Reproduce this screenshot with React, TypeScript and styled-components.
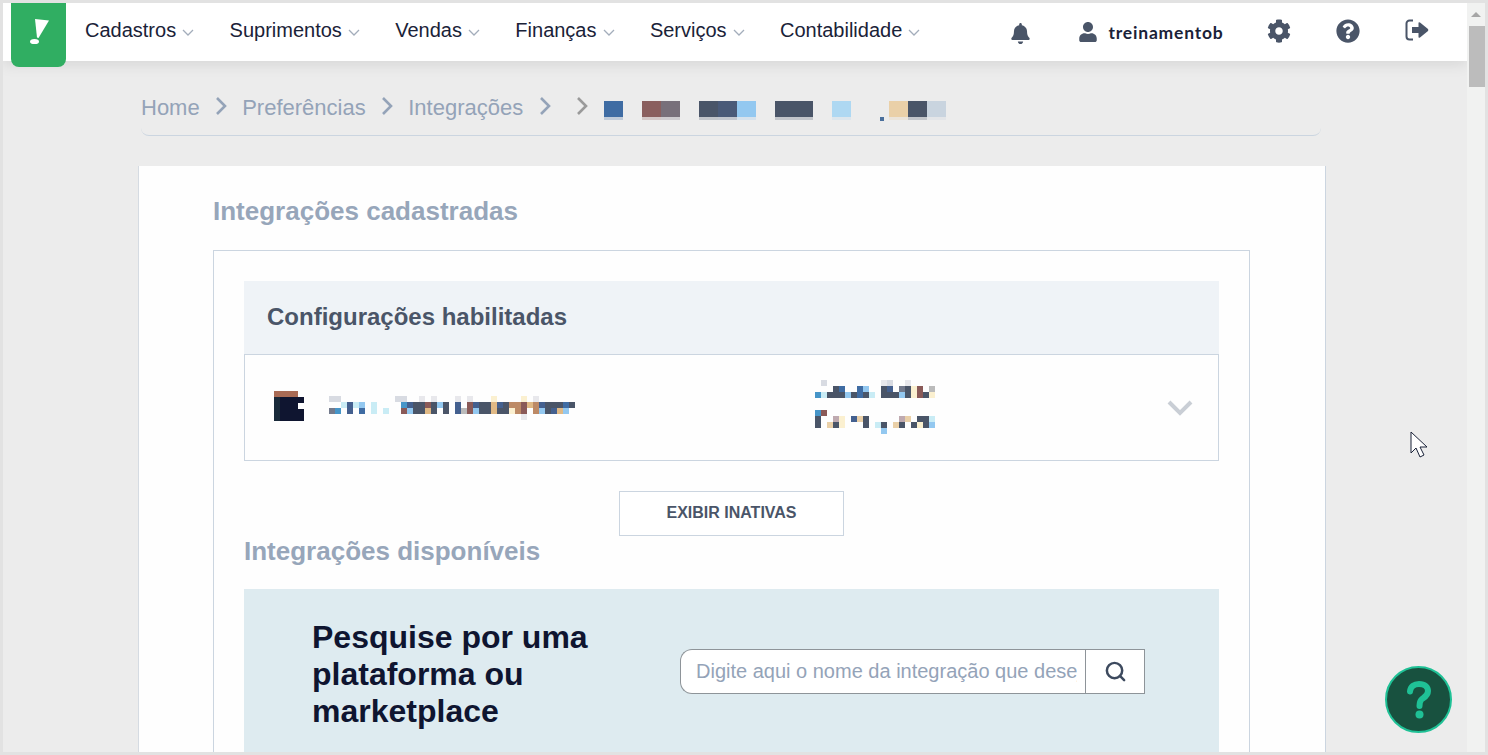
import React from 'react';
import styled, { createGlobalStyle } from 'styled-components';
import { FaBell, FaUser, FaCog, FaQuestionCircle } from 'react-icons/fa';
import { Search } from 'lucide-react';

const GlobalStyle = createGlobalStyle`
  html, body {
    margin: 0;
    height: 100%;
    overflow: hidden;
    background: #e2e2e2;
    font-family: "Liberation Sans", Arial, sans-serif;
  }
  * { box-sizing: border-box; }
`;

const Frame = styled.div`
  position: relative;
  width: 1488px;
  height: 755px;
  padding: 3px;
  display: flex;
  overflow: hidden;
`;

const Viewport = styled.div`
  width: 1464px;
  height: 749px;
  background: #ececec;
  overflow: hidden;
`;

const Scrollbar = styled.div`
  width: 18px;
  height: 749px;
  background: #f1f2f1;
  display: flex;
  flex-direction: column;
  align-items: center;
`;

const ScrollArrow = styled.div`
  width: 0;
  height: 0;
  margin-top: 9px;
  border-left: 5px solid transparent;
  border-right: 5px solid transparent;
  border-bottom: 5px solid #a6a6a6;
`;

const ScrollThumb = styled.div`
  width: 16px;
  height: 61px;
  margin: 9px 0 0 2px;
  background: #bcbcbc;
`;

const Header = styled.header`
  height: 58px;
  background: #fff;
  display: flex;
  align-items: flex-start;
  padding-left: 8px;
  box-shadow: 0 3px 14px rgba(0, 0, 0, 0.1);
  position: relative;
`;

const Logo = styled.div`
  width: 55px;
  height: 64px;
  flex: none;
  background: #30ae62;
  border-radius: 0 0 8px 8px;
  display: flex;
  align-items: center;
  justify-content: center;
  padding-bottom: 6px;
`;

const Nav = styled.nav`
  display: flex;
  gap: 35.4px;
  margin-left: 19px;
  height: 54px;
  align-items: center;
`;

const NavItem = styled.div`
  display: flex;
  align-items: center;
  gap: 6px;
  font-size: 20px;
  color: #1a2238;
`;

const NavChevron = styled.svg`
  width: 12px;
  height: 8px;
  margin-top: 5px;
  fill: none;
  stroke: #a3adbb;
  stroke-width: 1.3;
`;

const Tools = styled.div`
  margin-left: auto;
  width: 474px;
  height: 58px;
  display: flex;
  align-items: center;
  color: #4a5568;
`;

const ToolSlot = styled.div<{ $width: number; $top?: number }>`
  width: ${(p) => p.$width}px;
  flex: none;
  display: flex;
  align-items: center;
  justify-content: center;
  margin-top: ${(p) => p.$top ?? 0}px;
`;

const UserSlot = styled(ToolSlot)`
  padding-left: 4px;
`;

const UserName = styled.span`
  font-family: "Lato", "Open Sans", sans-serif;
  font-weight: 700;
  font-size: 17.5px;
  letter-spacing: 0.8px;
  color: #1a2238;
  margin-left: 10px;
`;

const Breadcrumb = styled.div`
  margin: 0 0 0 138px;
  width: 1180px;
  height: 75px;
  padding: 0 0 14px 0;
  display: flex;
  align-items: flex-end;
  border-bottom: 1px solid #cbd5e0;
  border-radius: 0 0 8px 8px;
  font-size: 22px;
  color: #94a3b8;
`;

const Crumb = styled.span`
  line-height: 26px;
`;

const CrumbArrow = styled.svg`
  width: 12px;
  height: 20px;
  margin: 0 15px 5px 15.5px;
  fill: none;
  stroke: #94a3b8;
  stroke-width: 2.6;
  flex: none;
`;

const LastArrow = styled(CrumbArrow)`
  margin: 0 16px 5px 10px;
  stroke: #9a9a9a;
`;

const Card = styled.main`
  margin: 30px 0 0 135px;
  width: 1188px;
  min-height: 640px;
  background: #fefefe;
  border-left: 1px solid #d5dbe2;
  border-right: 1px solid #cbd5e0;
  padding: 30px 75px 0 74px;
`;

const SectionTitle = styled.h2`
  margin: 0;
  font-size: 26px;
  line-height: 30px;
  font-weight: 700;
  color: #97a6ba;
`;

const OuterBox = styled.section`
  margin-top: 24px;
  width: 1037px;
  min-height: 520px;
  border: 1px solid #cbd5e0;
  padding: 30px 30px 0;
`;

const ConfigHeader = styled.div`
  height: 73px;
  background: #eff3f7;
  display: flex;
  align-items: center;
  padding: 0 0 2px 23px;
  font-size: 24px;
  font-weight: 700;
  color: #4a5568;
`;

const ConfigRow = styled.div`
  height: 107px;
  border: 1px solid #cbd5e0;
  display: flex;
  align-items: center;
  padding: 0 25px 4px 29px;
`;

const Mosaic = styled.svg`
  display: block;
  flex: none;
  shape-rendering: crispEdges;
`;

const RowName = styled.div`
  margin-left: 25px;
  width: 486px;
  margin-top: 5px;
`;

const RowDetail = styled.div`
  flex: 1;
  margin-top: 3px;
`;

const RowChevron = styled.svg`
  width: 26px;
  height: 16px;
  fill: none;
  stroke: #c9ced5;
  stroke-width: 4;
  margin-top: 5px;
`;

const Centered = styled.div`
  display: flex;
  justify-content: center;
  margin-top: 30px;
`;

const GhostButton = styled.button`
  width: 225px;
  height: 45px;
  background: #fff;
  border: 1px solid #cbd5e0;
  padding: 0 0 1px;
  font-family: inherit;
  font-size: 16px;
  font-weight: 700;
  color: #4a5568;
`;

const SearchPanel = styled.div`
  margin-top: 23px;
  height: 200px;
  background: #deebf0;
  display: flex;
  align-items: flex-start;
  padding: 30px 74px 0 68px;
`;

const SearchHeading = styled.h3`
  margin: 0;
  width: 368px;
  font-size: 32px;
  line-height: 37px;
  font-weight: 700;
  color: #0f1530;
`;

const SearchGroup = styled.div`
  display: flex;
  margin-top: 30px;
  height: 45px;
  width: 465px;
`;

const SearchInput = styled.input`
  width: 406px;
  height: 45px;
  border: 1px solid #8e9499;
  border-right: 0;
  border-radius: 12px 0 0 12px;
  background: #fff;
  padding: 0 8px 0 15px;
  font-family: inherit;
  font-size: 20px;
  outline: none;

  &::placeholder {
    color: #94a3b8;
    opacity: 1;
  }
`;

const SearchButton = styled.button`
  width: 60px;
  height: 45px;
  border: 1px solid #8e9499;
  background: #fff;
  color: #3d4a5e;
  display: flex;
  align-items: center;
  justify-content: center;
  padding: 0;
`;

const HelpFab = styled.div`
  position: absolute;
  left: 1385px;
  top: 666px;
  width: 67px;
  height: 67px;
  border-radius: 50%;
  background: #18513f;
  border: 2px solid #1fc196;
  display: flex;
  align-items: center;
  justify-content: center;
`;

const Pointer = styled.svg`
  position: absolute;
  left: 1410px;
  top: 431px;
`;

const BlurBlock = styled.div`
  position: relative;
  margin-bottom: 4px;
`;

/* the lighter band the blur leaves under each block */
const BlurEdge = styled.div`
  position: absolute;
  left: 0;
  top: 3px;
  opacity: 0.25;
`;

const BlurFace = styled.div`
  position: relative;
`;

const BlurDot = styled.span`
  position: absolute;
  left: 276px;
  top: 16px;
  width: 4px;
  height: 4px;
  background: #4a6f9c;
`;

const palette: Record<string, string> = {
  n: '#4a5568', b: '#44608f', B: '#3f6ca3', l: '#93c8f0', c: '#c9ecf5', r: '#8a5a58',
  t: '#bd8a66', o: '#e0b985', y: '#fbf0d0', C: '#4695c8', g: '#737a8c', s: '#bbbbbb',
  e: '#d8dbe2', p: '#bfaab0', k: '#ead0a8', d: '#0f1530', D: '#1a2a3a', w: '#a96b55',
  u: '#e8e8ec', h: '#8a5f5e', v: '#78707a', m: '#4a5a78', a: '#aed8f2', q: '#c9d4df',
};

function Pixels({ rows, cell = 6, cellWidth }: { rows: string[]; cell?: number; cellWidth?: number }) {
  const w = cellWidth ?? cell;
  const cols = Math.max(...rows.map((r) => r.length));
  return (
    <Mosaic width={cols * w} height={rows.length * cell}>
      {rows.flatMap((row, y) =>
        row.split('').map((ch, x) =>
          ch === '.' ? null : (
            <rect key={`${x}-${y}`} x={x * w} y={y * cell} width={w} height={cell} fill={palette[ch]} />
          ),
        ),
      )}
    </Mosaic>
  );
}

const navItems = ['Cadastros', 'Suprimentos', 'Vendas', 'Finanças', 'Serviços', 'Contabilidade'];
const crumbs = ['Home', 'Preferências', 'Integrações'];
const crumbBlur = ['B.hv.nml.nn.a..knq'];

const nameRows = [
  'ee.........ee..u.u...u.u...y....y.u......',
  '..cbcl.c....Cbnnrnln.b.rbnnobnttrotbnnnBn',
  'gC.b.B.c.c..rlnnon.n.bsrlnnonnytr.tlnbol.',
  '................................u........',
];

const detailRows = [
  '.e.........ue..u....',
  '...nB..Bl..nb.gnyr.s',
  'CcnnnlnBnc.nnnlnyrny',
  '....................',
  '....................',
  'Cr..................',
  'n..py.bkn.....pk.nnc',
  'n.kny...n.cn.kn.nynl',
  '...........l........',
];

export default function App() {
  return (
    <>
      <GlobalStyle />
      <Frame>
        <Viewport>
          <Header>
            <Logo>
              <svg width="20" height="28" viewBox="0 0 20 28">
                <path d="M6 1 L20 2.5 L9.5 20 L8 19.5 Z" fill="#fff" />
                <ellipse cx="5.5" cy="23.5" rx="4.5" ry="2.6" fill="#fff" />
              </svg>
            </Logo>
            <Nav>
              {navItems.map((item) => (
                <NavItem key={item}>
                  {item}
                  <NavChevron viewBox="0 0 12 8">
                    <polyline points="1,1 6,6 11,1" />
                  </NavChevron>
                </NavItem>
              ))}
            </Nav>
            <Tools>
              <ToolSlot $width={54} $top={2}>
                <FaBell size={21} />
              </ToolSlot>
              <UserSlot $width={204}>
                <FaUser size={20} />
                <UserName>treinamentob</UserName>
              </UserSlot>
              <ToolSlot $width={56} $top={-2}>
                <FaCog size={24} />
              </ToolSlot>
              <ToolSlot $width={82} $top={-2}>
                <FaQuestionCircle size={24} />
              </ToolSlot>
              <ToolSlot $width={56} $top={-4}>
                <svg width="24" height="22" viewBox="0 0 24 22">
                  <path
                    d="M8 1.5 H4.5 A3 3 0 0 0 1.5 4.5 V17.5 A3 3 0 0 0 4.5 20.5 H8"
                    fill="none"
                    stroke="currentColor"
                    strokeWidth="2"
                  />
                  <path
                    d="M7 8 H13.5 V4 Q13.5 2.8 15 3.6 L23 10 Q23.6 11 23 12 L15 18.4 Q13.5 19.2 13.5 18 V14 H7 Z"
                    fill="currentColor"
                  />
                </svg>
              </ToolSlot>
            </Tools>
          </Header>

          <Breadcrumb>
            {crumbs.map((c) => (
              <React.Fragment key={c}>
                <Crumb>{c}</Crumb>
                <CrumbArrow viewBox="0 0 12 20">
                  <polyline points="2,2 10,10 2,18" />
                </CrumbArrow>
              </React.Fragment>
            ))}
            <LastArrow viewBox="0 0 12 20">
              <polyline points="2,2 10,10 2,18" />
            </LastArrow>
            <BlurBlock>
              <BlurEdge>
                <Pixels cell={16} cellWidth={19} rows={crumbBlur} />
              </BlurEdge>
              <BlurFace>
                <Pixels cell={16} cellWidth={19} rows={crumbBlur} />
              </BlurFace>
              <BlurDot />
            </BlurBlock>
          </Breadcrumb>

          <Card>
            <SectionTitle>Integrações cadastradas</SectionTitle>
            <OuterBox>
              <ConfigHeader>Configurações habilitadas</ConfigHeader>
              <ConfigRow>
                <Pixels rows={['wwww.', 'Ddddd', 'Dddd.', 'Ddddd', 'Ddddd']} />
                <RowName>
                  <Pixels rows={nameRows} />
                </RowName>
                <RowDetail>
                  <Pixels rows={detailRows} />
                </RowDetail>
                <RowChevron viewBox="0 0 26 16">
                  <polyline points="2,2 13,13 24,2" />
                </RowChevron>
              </ConfigRow>
              <Centered>
                <GhostButton>EXIBIR INATIVAS</GhostButton>
              </Centered>
              <SectionTitle>Integrações disponíveis</SectionTitle>
              <SearchPanel>
                <SearchHeading>Pesquise por uma plataforma ou marketplace</SearchHeading>
                <SearchGroup>
                  <SearchInput placeholder="Digite aqui o nome da integração que deseja" />
                  <SearchButton aria-label="Pesquisar">
                    <Search size={23} strokeWidth={2.6} />
                  </SearchButton>
                </SearchGroup>
              </SearchPanel>
            </OuterBox>
          </Card>
        </Viewport>
        <Scrollbar>
          <ScrollArrow />
          <ScrollThumb />
        </Scrollbar>
        <HelpFab>
          <svg width="24" height="38" viewBox="0 0 24 38">
            <path
              d="M3 10.5 C3.5 5.5 7 3 12 3 C18 3 21 6 21 10 C21 15 17 16.5 14.5 18.5 C13 20 12.5 21.5 12.5 25"
              fill="none"
              stroke="#1fc196"
              strokeWidth="6"
              strokeLinecap="round"
            />
            <circle cx="12.5" cy="33.5" r="4" fill="#1fc196" />
          </svg>
        </HelpFab>
        <Pointer width="20" height="30" viewBox="0 0 20 30">
          <path d="M1 1 V22 L6 17 L10 26 L14 24 L10 16 L17 16 Z" fill="#fff" stroke="#1a2238" strokeWidth="1" />
        </Pointer>
      </Frame>
    </>
  );
}
